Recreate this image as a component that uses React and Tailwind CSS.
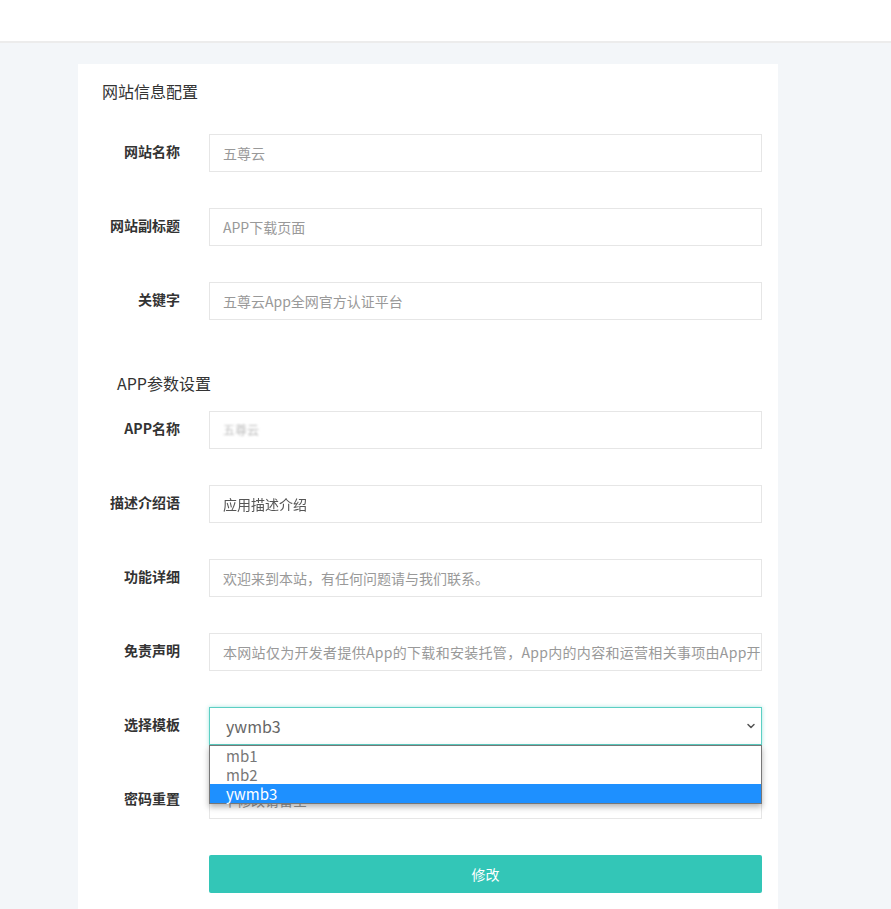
import React from "react";

const font = { fontFamily: '"Noto Sans CJK SC", "Noto Sans", sans-serif' };

function Row({ label, children }) {
    return (
        <div className="flex items-center h-[38px]">
            <div className="w-[102px] shrink-0 pb-[3px] text-right text-[14px] font-bold text-[#333]">{label}</div>
            <div className="ml-[29px] w-[553px]">{children}</div>
        </div>
    );
}

function Field({ value, className = "" }) {
    return (
        <div className="h-[38px] border border-[#e6e6e6] flex items-center px-[13px] text-[14px] text-[#999] whitespace-nowrap overflow-hidden">
            <span className={className}>{value}</span>
        </div>
    );
}

export default function App() {
    return (
        <div className="min-h-[909px] bg-[#f3f6f9]" style={font}>
            <div className="h-[43px] bg-white border-b-2 border-[#ececec]"></div>
            <div className="ml-[78px] mt-[21px] w-[700px] bg-white pt-[15px] pb-[40px]">
                <div className="pl-[24px] h-[24px] leading-[24px] text-[16px] text-[#333]">网站信息配置</div>
                <div className="mt-[31px] flex flex-col gap-[36px]">
                    <Row label="网站名称"><Field value="五尊云" /></Row>
                    <Row label="网站副标题"><Field value="APP下载页面" /></Row>
                    <Row label="关键字"><Field value="五尊云App全网官方认证平台" /></Row>
                </div>
                <div className="mt-[51px] pl-[39px] h-[24px] leading-[24px] text-[16px] text-[#333]">APP参数设置</div>
                <div className="mt-[16px] flex flex-col gap-[36px]">
                    <Row label="APP名称"><Field value="五尊云" className="blur-[1px] text-[#bbb] text-[12px]" /></Row>
                    <Row label="描述介绍语"><Field value="应用描述介绍" className="blur-[0.6px] text-[#555]" /></Row>
                    <Row label="功能详细"><Field value="欢迎来到本站，有任何问题请与我们联系。" /></Row>
                    <Row label="免责声明"><Field value="本网站仅为开发者提供App的下载和安装托管，App内的内容和运营相关事项由App开发者负责，与本网站无关。" className="tracking-[0.3px]" /></Row>
                    <Row label="选择模板">
                        <div className="relative">
                            <div className="h-[38px] border border-[#5ccfc3] shadow-[0_0_4px_rgba(51,198,183,0.45)] flex items-center justify-between pl-[16px] pr-[4px] text-[16px] text-[#666]">
                                <span>ywmb3</span>
                                <svg width="12" height="12" viewBox="0 0 24 24" fill="none" stroke="#555" strokeWidth="3" strokeLinecap="round" strokeLinejoin="round">
                                    <path d="M6 9l6 6 6-6" />
                                </svg>
                            </div>
                            <div className="absolute left-0 right-0 top-[38px] z-10 bg-white border border-[#777] shadow-[0_3px_6px_rgba(0,0,0,0.3)] text-[15px] leading-[19px]">
                                <div className="pl-[16px] h-[19px] text-[#777]">mb1</div>
                                <div className="pl-[16px] h-[19px] text-[#777]">mb2</div>
                                <div className="pl-[16px] h-[19px] bg-[#1e90ff] text-white">ywmb3</div>
                            </div>
                        </div>
                    </Row>
                    <Row label="密码重置"><Field value="不修改请留空" /></Row>
                    <Row label="">
                        <button className="w-full h-[38px] bg-[#33c6b7] rounded-[2px] text-white text-[14px]">修改</button>
                    </Row>
                </div>
            </div>
        </div>
    );
}
